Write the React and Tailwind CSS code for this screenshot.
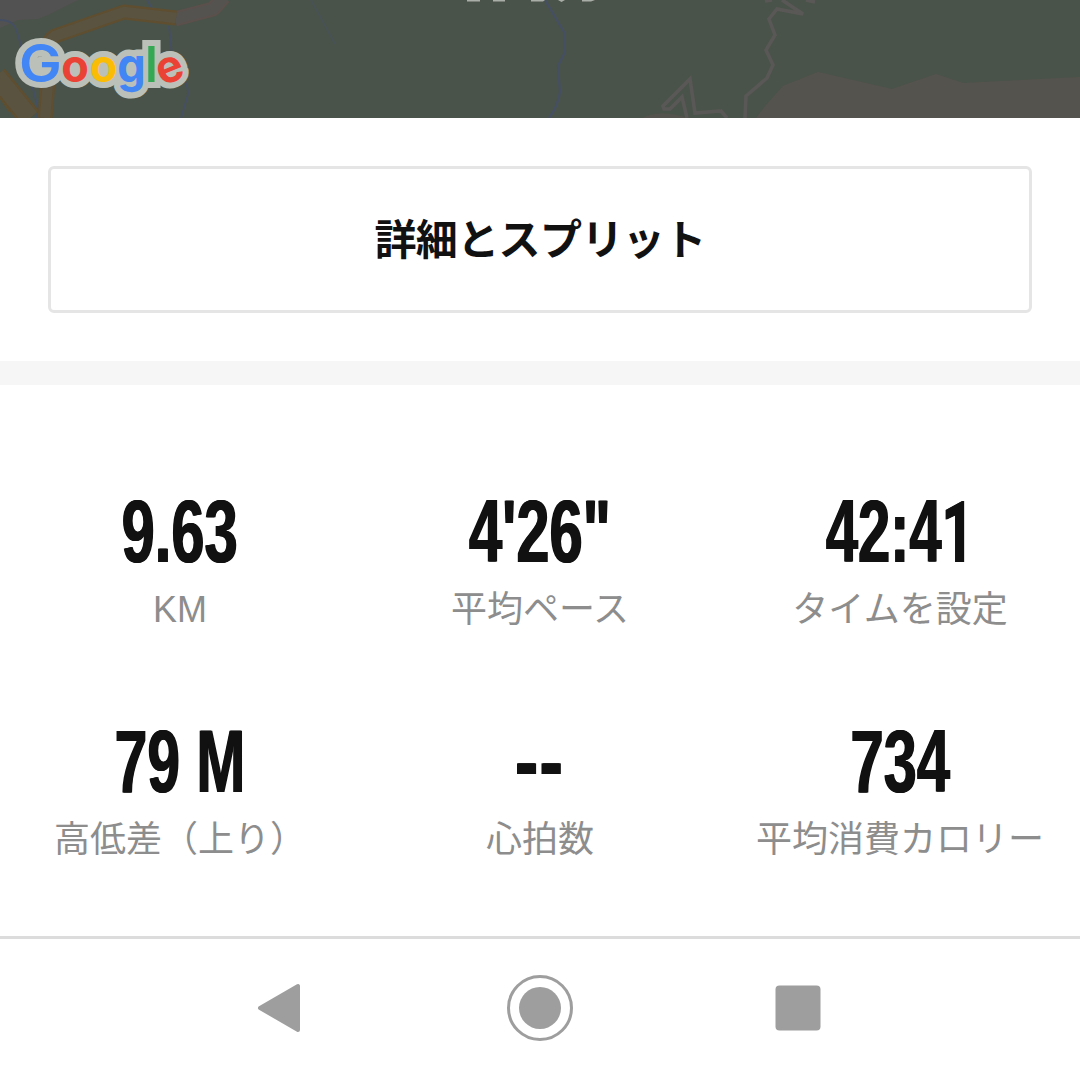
const STATS = [
  { value: '9.63', label: 'KM', width: 'scale-x-[0.67]' },
  { value: '4\'26"', label: '平均ペース', width: 'scale-x-[0.67]' },
  {
    value: (
      <>
        42:4<span className="font-['Roboto',sans-serif] text-[86px]">1</span>
      </>
    ),
    label: 'タイムを設定',
    width: 'scale-x-[0.65]',
  },
  { value: '79 M', label: '高低差（上り）', width: 'scale-x-[0.66]' },
  { value: '--', label: '心拍数', width: 'scale-x-[0.78] tracking-[2px]' },
  { value: '734', label: '平均消費カロリー', width: 'scale-x-[0.67]' },
];

const LOGO_LETTERS = [
  { char: 'G', x: 0, y: 82, size: 52, weight: 600, color: '#4285f4', transform: 'translate(40.5 0) scale(1.1 1)' },
  { char: 'o', x: 75, y: 82, size: 45, weight: 700, color: '#ea4335' },
  { char: 'o', x: 103.5, y: 82, size: 45, weight: 700, color: '#fbbc05' },
  { char: 'g', x: 131.5, y: 82.5, size: 45, weight: 700, color: '#4285f4', transform: 'translate(0 -6) scale(1 1.07)' },
  { char: 'l', x: 151.5, y: 82, size: 49, weight: 600, color: '#34a853' },
  { char: 'e', x: 170, y: 82, size: 45, weight: 700, color: '#ea4335', transform: 'rotate(-22 170 70)' },
];

function LogoLetter({ letter, halo }) {
  const { char, x, y, size, weight, color, transform } = letter;

  return (
    <text
      x={x}
      y={y}
      textAnchor="middle"
      fontSize={size}
      fontWeight={weight}
      fill={halo ? '#bbc0b9' : color}
      stroke={halo ? '#bbc0b9' : 'none'}
      strokeWidth={halo ? 12 : 0}
      strokeLinejoin={char === 'l' ? 'miter' : 'round'}
      transform={transform}
    >
      {char}
    </text>
  );
}

function MapStrip() {
  return (
    <svg className="block h-[118px] w-full" viewBox="0 0 1080 118" fill="none">
      <rect width="1080" height="118" fill="#4a5349" />
      <path d="M0 0H78L50 14L38 19L18 20L0 28Z" fill="#535252" />

      {/* rivers */}
      <g stroke="#454f64" strokeWidth="1.8">
        <path d="M0 20Q14 20 17 32L26 62L38 108L37 118" />
        <path d="M147 0L152 8M169 26L172 55L184 80Q190 90 187 98L181 118" />
        <path d="M545 0L564 32L565 52L558 66L560 92Q558 106 549 118" strokeWidth="2.2" />
        <path d="M311 0L335 44" stroke="#485255" />
      </g>

      {/* highway */}
      <path d="M175 19L213 9L224 -3" stroke="#5b504b" strokeWidth="15" strokeLinejoin="round" />
      <path d="M175 19L213 9L224 -3" stroke="#555350" strokeWidth="11" strokeLinejoin="round" />
      <g strokeLinejoin="round">
        <path d="M45 118L50 58Q45 42 55 36L124 12L176 18" stroke="#5f4e2f" strokeWidth="15" />
        <path d="M-4 76L30 118" stroke="#5f4e2f" strokeWidth="23" />
        <path d="M45 118L50 58Q45 42 55 36L124 12L176 18" stroke="#5a533f" strokeWidth="10.5" />
        <path d="M-4 76L30 118" stroke="#5a533f" strokeWidth="18" />
        <path d="M0 97L10 112" stroke="#5f4e2f" strokeWidth="2" />
      </g>

      {/* bare ground and mountain trail */}
      <path d="M756 118L766 105L783 86L818 72L892 89L936 74L963 83L1080 77V118Z" fill="#55534d" />
      <path d="M642 118Q660 109 688 118Z" fill="#55534d" />
      <g stroke="#5a5857" strokeWidth="3.5">
        <path d="M745 118L746 96L767 78L773 65L766 50L775 35L769 19L777 9L803 14L782 0M765 1L772 0M806 0L815 2" />
        <path d="M720 110L727 118M687 118L682 97L670 109H664L663 106L690 79L695 113L720 111" />
      </g>

      {/* lower edge of a place name cut off by the screen */}
      <path d="M467 0H480V1.5H467ZM493 0H505V1.5H493ZM531 0H545L543 1.5H531ZM558 0H565L561.5 2ZM582 0H595L591 1.5H582Z" fill="#a9aea8" />

      <g fontFamily="Inter, sans-serif" aria-label="Google">
        {LOGO_LETTERS.map((letter) => (
          <LogoLetter key={`halo-${letter.x}`} letter={letter} halo />
        ))}
        {LOGO_LETTERS.map((letter) => (
          <LogoLetter key={letter.x} letter={letter} />
        ))}
      </g>
    </svg>
  );
}

function Stat({ value, label, width }) {
  return (
    <div className="flex h-[230px] flex-col items-center whitespace-nowrap">
      <div
        className={`h-[100px] text-[89px] leading-[100px] font-bold text-[#111] [text-shadow:1px_0_#111,-1px_0_#111] ${width}`}
      >
        {value}
      </div>
      <div className="mt-[3px] text-[36px] leading-[52px] text-[#8d8d8d]">{label}</div>
    </div>
  );
}

function NavBar() {
  return (
    <nav className="h-36 border-t-[3px] border-[#dcdcdc]">
      <svg className="block h-[141px] w-full" viewBox="0 939 1080 141" fill="#9e9e9e">
        <path
          d="M260 1008L298 986V1030Z"
          stroke="#9e9e9e"
          strokeWidth="4"
          strokeLinejoin="round"
        />
        <circle cx="540" cy="1008" r="31.5" fill="none" stroke="#9e9e9e" strokeWidth="3" />
        <circle cx="540" cy="1008" r="21" />
        <rect x="775.5" y="985.5" width="45" height="45" rx="4" />
      </svg>
    </nav>
  );
}

export default function App() {
  return (
    <main className="flex h-[1080px] w-[1080px] flex-col overflow-hidden bg-white font-['Liberation_Sans','Noto_Sans_CJK_JP',sans-serif]">
      <MapStrip />
      <section className="h-[243px] px-12 pt-12">
        <button className="flex h-[147px] w-full items-center justify-center rounded-md border-[3px] border-[#e5e5e5] pt-px text-[42px] font-bold tracking-[-0.6px] text-[#111]">
          詳細とスプリット
        </button>
      </section>
      <div className="h-6 bg-[#f6f6f6]" />
      <section className="grid h-[551px] grid-cols-3 content-start pt-24">
        {STATS.map((stat) => (
          <Stat key={stat.label} {...stat} />
        ))}
      </section>
      <NavBar />
    </main>
  );
}
